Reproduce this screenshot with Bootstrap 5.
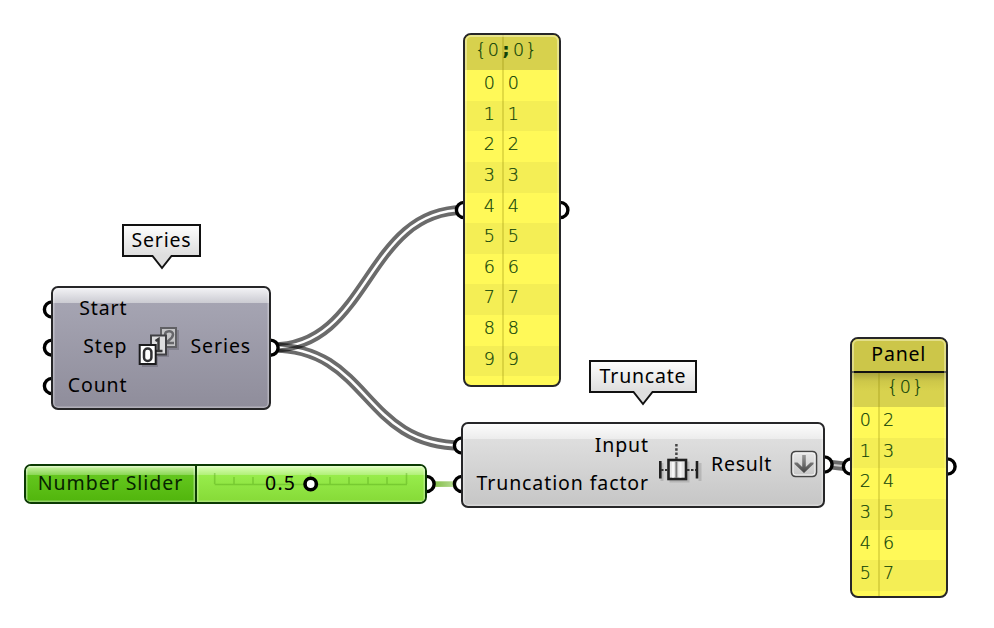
<!DOCTYPE html>
<html lang="en">
<head>
<meta charset="utf-8">
<meta name="viewport" content="width=device-width, initial-scale=1">
<title>Series and Truncate</title>
<link href="https://cdn.jsdelivr.net/npm/bootstrap@5.3.0/dist/css/bootstrap.min.css" rel="stylesheet">
<style>
body{margin:0;background:#fff}
.graph{width:994px;height:628px;font-family:"Noto Sans","Open Sans",sans-serif;font-size:19.5px;line-height:24px;color:#000;background:#fff}
.graph svg{display:block}
.node,.tag-label,.wires{position:absolute}
.wires{left:0;top:0}
.node{border:2px solid #262628;border-radius:7px}
/* callout labels */
.tag-label{height:33px;line-height:28px;border:2px solid #111;background:linear-gradient(#fdfdfd,#dedede);letter-spacing:.8px}
.tag-label svg{position:absolute;top:29px;left:50%;margin-left:-11px}
.tag-series{left:122px;top:224px;width:79px}
.tag-truncate{left:589px;top:360px;width:108px}
/* components */
.series{left:51px;top:286px;width:220px;height:124px;background:linear-gradient(#f2f2f5 0,#cbcbd2 15px,#a5a4b2 15.5px,#8f8d9b 100%);box-shadow:inset 0 0 0 1.5px #ffffff50}
.series .inputs{width:74.5px;margin-top:1px}
.truncate{left:461px;top:422px;width:364px;height:86px;padding-bottom:2px;background:linear-gradient(#fcfcfc 0,#ececec 15px,#dedede 15.5px,#c6c6c6 100%);box-shadow:inset 0 0 0 1.5px #ffffff50}
.truncate .inputs{width:186px;padding-top:2px}
.inputs span{height:38.3px;line-height:38.3px;white-space:nowrap}
.ls{letter-spacing:.9px}
.result{letter-spacing:.75px}
/* slider */
.slider{left:24px;top:464px;width:403px;height:40px;border-color:#0b3a03;overflow:hidden}
.slider .name{width:171px;padding-bottom:2px;border-right:2px solid #0b3a03;background:linear-gradient(#cdf4a8 0,#8ad754 9px,#63c61d 9.5px,#51b50c 100%);box-shadow:inset 0 0 0 1.5px #ffffff60;color:#062300;letter-spacing:.95px}
.slider .track{background:linear-gradient(#dbffb9 0,#b1f078 9px,#97ec4b 9.5px,#86da37 100%);box-shadow:inset 0 0 0 1.5px #ffffff50}
/* data panels */
.data-panel{background:#fff958;overflow:hidden;border-radius:8px;color:#0e4208;font-family:"DejaVu Sans","Liberation Mono",monospace;font-weight:200;font-size:17.5px;-webkit-text-stroke:.2px #0e4208}
.data-panel .line{height:30.65px;line-height:27px}
.data-panel .line:nth-child(even){background:#f4ee55}
.data-panel .path{background:#d7d14d;text-align:center}
.data-panel .path span{display:inline-block;width:12.6px;text-align:center}
.data-panel .divide{position:absolute;top:0;bottom:0;width:2px;background:#8a850040}
.data-panel:after{content:"";position:absolute;inset:0;border-radius:6px;box-shadow:inset 0 0 0 2px #fffce070;mask-image:linear-gradient(#000,#0000 85%);-webkit-mask-image:linear-gradient(#000,#0000 85%)}
.pa{left:463px;top:33px;width:98px;height:354px}
.pa .path{height:35px;line-height:30px;padding-right:12px}
.pa .idx{width:30px;text-align:right}
.pa .val{margin-left:12.8px}
.pa .divide{left:36.5px}
.pb{left:850px;top:337px;width:97.5px;height:261px}
.pb .heading{height:34px;line-height:29px;background:#ccc649;border-bottom:2px solid #111;color:#000;font-family:"Noto Sans","Open Sans",sans-serif;font-weight:400;font-size:19.5px;letter-spacing:.8px;-webkit-text-stroke:0}
.pb .path{height:34px;line-height:29px;padding-left:13px;background:linear-gradient(#aaa53e,#cdc749 8px,#d8d24e 18px)}
.pb .idx{width:19px;text-align:right}
.pb .val{margin-left:12px}
.pb .divide{left:25.5px;top:34px}
</style>
<script src="https://cdn.jsdelivr.net/npm/bootstrap@5.3.0/dist/js/bootstrap.bundle.min.js"></script>
</head>
<body>
<main class="graph position-relative overflow-hidden">
<svg class="wires" width="994" height="628" viewBox="0 0 994 628">
  <defs>
    <path id="w1" d="M272 347.5C370 347.5 365 210 464 210"/>
    <path id="w2" d="M272 347.5C370 347.5 362 445.5 462 445.5"/>
    <path id="w3" d="M825 464.5C838 464.5 838 466.5 851 466.5"/>
    <mask id="m1" maskUnits="userSpaceOnUse" x="0" y="0" width="994" height="628"><g fill="none"><use href="#w1" stroke="#fff" stroke-width="10.2"/><use href="#w1" stroke="#000" stroke-width="2.5"/></g></mask>
    <mask id="m2" maskUnits="userSpaceOnUse" x="0" y="0" width="994" height="628"><g fill="none"><use href="#w2" stroke="#fff" stroke-width="10.2"/><use href="#w2" stroke="#000" stroke-width="2.5"/></g></mask>
    <linearGradient id="gw" gradientUnits="userSpaceOnUse" x1="435" y1="0" x2="454" y2="0"><stop stop-color="#86c04d"/><stop offset="1" stop-color="#b5da90"/></linearGradient>
  </defs>
  <rect width="994" height="628" fill="#000" fill-opacity=".58" mask="url(#m1)"/>
  <rect width="994" height="628" fill="#000" fill-opacity=".58" mask="url(#m2)"/>
  <g fill="none"><use href="#w3" stroke="#6b6b6b" stroke-width="9.6"/><use href="#w3" stroke="#c8c8c8" stroke-width="1.8"/></g>
  <rect x="427" y="481.3" width="35" height="5.6" fill="url(#gw)"/>
  <g fill="#fff" stroke="#000" stroke-width="3.4">
    <circle cx="52" cy="309.5" r="7.6"/><circle cx="52" cy="347.7" r="7.6"/><circle cx="52" cy="386" r="7.6"/>
    <circle cx="270.5" cy="347.7" r="7.6"/><circle cx="464" cy="210" r="7.6"/><circle cx="560.3" cy="210" r="7.6"/>
    <circle cx="462" cy="445.5" r="7.6"/><circle cx="462" cy="484" r="7.6"/><circle cx="824.5" cy="464.5" r="7.6"/>
    <circle cx="851" cy="466.5" r="7.6"/><circle cx="947.5" cy="466.5" r="7.6"/><circle cx="426.5" cy="484" r="7.6"/>
  </g>
</svg>

<div class="tag-label tag-series text-center">Series<svg width="22" height="16" viewBox="0 0 22 16"><path d="M1 0H21L11 13Z" fill="#dedede"/><path d="M0 1H1.5L11 13L20.5 1H22" fill="none" stroke="#111" stroke-width="2"/></svg></div>
<div class="tag-label tag-truncate text-center">Truncate<svg width="22" height="16" viewBox="0 0 22 16"><path d="M1 0H21L11 13Z" fill="#dedede"/><path d="M0 1H1.5L11 13L20.5 1H22" fill="none" stroke="#111" stroke-width="2"/></svg></div>

<section class="node series d-flex ls">
  <div class="inputs d-flex flex-column text-end"><span>Start</span><span>Step</span><span>Count</span></div>
  <svg class="align-self-center ms-2 flex-shrink-0" width="47" height="46" viewBox="0 0 47 46">
    <g fill="#55535f" opacity=".35"><rect x="27" y="5" width="16" height="20"/><rect x="17" y="12" width="16" height="20"/><rect x="6" y="22" width="16" height="20"/></g>
    <g stroke-width="2"><rect x="25" y="3" width="15" height="19" fill="#c4c4c6" stroke="#606064"/><path d="M29 10C29 5 37 5 37 9.500C37 13 34 14 30 18H38" fill="none" stroke="#66666a" stroke-width="2.500"/><rect x="15" y="10.500" width="15" height="19" fill="#dcdcde" stroke="#404044"/><path d="M19.500 16L22.500 14V26M19 26H26.500" fill="none" stroke="#38383a" stroke-width="2.500"/><rect x="3.700" y="20" width="16" height="19" fill="#fff" stroke="#1c1c1e"/><rect x="8" y="23.500" width="7.400" height="12.500" rx="3.600" fill="none" stroke="#303033" stroke-width="2.500"/></g>
  </svg>
  <span class="align-self-center ms-2 pb-1">Series</span>
</section>

<section class="node truncate d-flex ls">
  <div class="inputs d-flex flex-column text-end"><span>Input</span><span>Truncation factor</span></div>
  <svg class="align-self-center ms-2 flex-shrink-0" width="46" height="44" viewBox="0 0 46 44">
    <g transform="translate(2 2)" stroke="#000" opacity=".12" fill="none" stroke-width="3"><path d="M3 19V37M41 19V37"/><rect x="12" y="19" width="17" height="18"/></g>
    <g fill="none" stroke="#202020" stroke-width="2.600"><path d="M3.300 19V36.500M40 19V36.500"/><rect x="11.500" y="18" width="17.500" height="19" fill="#e4e4e4"/></g>
    <path d="M16 20V35.500M23.500 20V35.500" stroke="#f6f6f6" stroke-width="2"/>
    <path d="M19.400 19.500V36" stroke="#777" stroke-width="2"/>
    <path d="M19.400 2V17" stroke="#444" stroke-width="2.500" stroke-dasharray="2.500 1.800"/>
    <path d="M4 28H11M30 28H39" stroke="#333" stroke-width="2" stroke-dasharray="2.500 1.500"/>
  </svg>
  <span class="align-self-center ms-2 result">Result</span>
  <svg class="align-self-center ms-auto flex-shrink-0 arrow-toggle me-1" width="29" height="28" viewBox="0 0 29 28">
    <defs><linearGradient id="bt" x2="0" y2="1"><stop stop-color="#e9e9e9"/><stop offset="1" stop-color="#c6c6c6"/></linearGradient><linearGradient id="ar" x2="0" y2="1"><stop stop-color="#999"/><stop offset="1" stop-color="#444"/></linearGradient></defs>
    <rect x="1.500" y="1.500" width="25" height="25" rx="4" fill="url(#bt)" stroke="#444" stroke-width="1.600"/><rect x="3" y="3" width="22" height="22" rx="3" fill="none" stroke="#f4f4f4"/>
    <path d="M12.200 5H15.800V17L20.500 12.500H23.500V14L14 23L4.500 14V12.500H7.500L12.200 17Z" fill="url(#ar)"/>
  </svg>
</section>

<section class="node slider d-flex">
  <div class="name d-flex align-items-center justify-content-center flex-shrink-0"><span>Number Slider</span></div>
  <div class="track flex-grow-1">
    <svg width="228" height="36" viewBox="197 466 228 36">
      <path d="M214.700 484.500H407M214.700 473V484M406.500 473V484M310.500 473V484M234 477V484M253 477V484M272 477V484M291.500 477V484M330 477V484M349 477V484M368 477V484M387 477V484" fill="none" stroke="#4a9a10" stroke-opacity=".36" stroke-width="1.600"/>
      <text x="265" y="490" font-size="19.500" textLength="30">0.5</text>
      <circle cx="310.700" cy="484" r="5.700" fill="#fff" stroke="#000" stroke-width="3.600"/>
    </svg>
  </div>
</section>

<section class="node data-panel pa">
  <div class="path"><span>{</span><span>0</span><span class="fw-bold">;</span><span>0</span><span>}</span></div>
  <div>
    <div class="line d-flex"><span class="idx">0</span><span class="val">0</span></div>
    <div class="line d-flex"><span class="idx">1</span><span class="val">1</span></div>
    <div class="line d-flex"><span class="idx">2</span><span class="val">2</span></div>
    <div class="line d-flex"><span class="idx">3</span><span class="val">3</span></div>
    <div class="line d-flex"><span class="idx">4</span><span class="val">4</span></div>
    <div class="line d-flex"><span class="idx">5</span><span class="val">5</span></div>
    <div class="line d-flex"><span class="idx">6</span><span class="val">6</span></div>
    <div class="line d-flex"><span class="idx">7</span><span class="val">7</span></div>
    <div class="line d-flex"><span class="idx">8</span><span class="val">8</span></div>
    <div class="line d-flex"><span class="idx">9</span><span class="val">9</span></div>
  </div>
  <i class="divide"></i>
</section>

<section class="node data-panel pb">
  <div class="heading text-center">Panel</div>
  <div class="path"><span>{</span><span>0</span><span>}</span></div>
  <div>
    <div class="line d-flex"><span class="idx">0</span><span class="val">2</span></div>
    <div class="line d-flex"><span class="idx">1</span><span class="val">3</span></div>
    <div class="line d-flex"><span class="idx">2</span><span class="val">4</span></div>
    <div class="line d-flex"><span class="idx">3</span><span class="val">5</span></div>
    <div class="line d-flex"><span class="idx">4</span><span class="val">6</span></div>
    <div class="line d-flex"><span class="idx">5</span><span class="val">7</span></div>
  </div>
  <i class="divide"></i>
</section>
</main>
</body>
</html>
